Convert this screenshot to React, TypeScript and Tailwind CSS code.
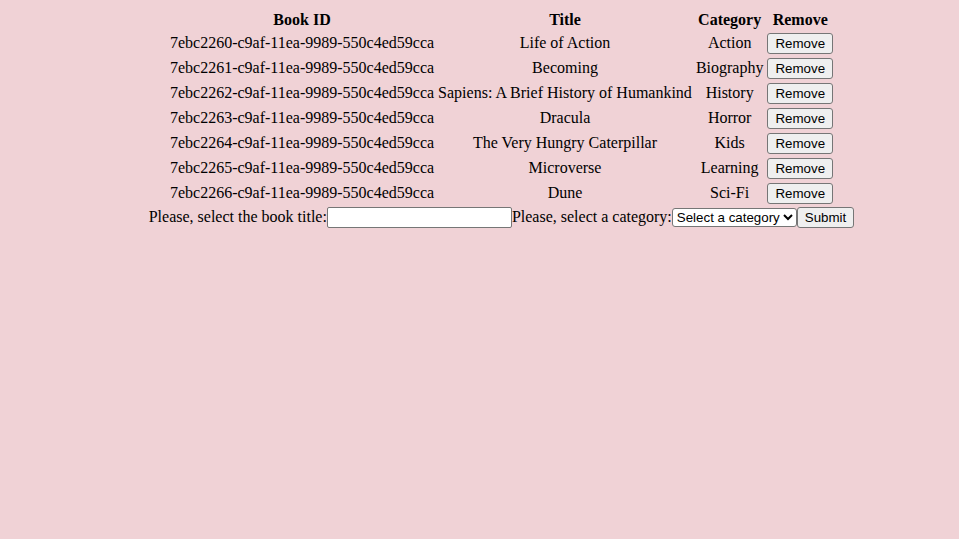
const books = [
  { id: '7ebc2260-c9af-11ea-9989-550c4ed59cca', title: 'Life of Action', category: 'Action' },
  { id: '7ebc2261-c9af-11ea-9989-550c4ed59cca', title: 'Becoming', category: 'Biography' },
  { id: '7ebc2262-c9af-11ea-9989-550c4ed59cca', title: 'Sapiens: A Brief History of Humankind', category: 'History' },
  { id: '7ebc2263-c9af-11ea-9989-550c4ed59cca', title: 'Dracula', category: 'Horror' },
  { id: '7ebc2264-c9af-11ea-9989-550c4ed59cca', title: 'The Very Hungry Caterpillar', category: 'Kids' },
  { id: '7ebc2265-c9af-11ea-9989-550c4ed59cca', title: 'Microverse', category: 'Learning' },
  { id: '7ebc2266-c9af-11ea-9989-550c4ed59cca', title: 'Dune', category: 'Sci-Fi' },
]

const categories = ['Action', 'Biography', 'History', 'Horror', 'Kids', 'Learning', 'Sci-Fi']

const btn =
  "bg-[#efefef] border border-[#767676] rounded-[3px] px-[7px] py-[2px] font-['Liberation_Sans',Arial,sans-serif] text-[13.333px] leading-[15px] text-black"

export default function App() {
  return (
    <div className="min-h-screen bg-[#f0d2d6] pl-[52px] pr-[8px] pt-[8px] font-['Liberation_Serif','Times_New_Roman',serif] text-[16px] leading-[normal] text-black">
      <table className="mx-auto border-separate border-spacing-[2px]">
        <thead>
          <tr>
            <th className="p-px font-bold text-center">Book ID</th>
            <th className="p-px font-bold text-center">Title</th>
            <th className="p-px font-bold text-center">Category</th>
            <th className="p-px font-bold text-center">Remove</th>
          </tr>
        </thead>
        <tbody>
          {books.map((b) => (
            <tr key={b.id}>
              <td className="p-px pb-[2px] text-center">{b.id}</td>
              <td className="p-px pb-[2px] text-center">{b.title}</td>
              <td className="p-px pb-[2px] text-center">{b.category}</td>
              <td className="p-px text-center">
                <button type="button" className={btn}>
                  Remove
                </button>
              </td>
            </tr>
          ))}
        </tbody>
      </table>

      <form className="text-center">
        <label>
          Please, select the book title:
          <input
            type="text"
            className="w-[185px] h-[21px] bg-white border border-[#767676] rounded-[2px] px-[2px] align-baseline font-['Liberation_Sans',Arial,sans-serif] text-[13.333px]"
          />
        </label>
        <label>
          Please, select a category:
          <select
            defaultValue=""
            className="w-[125px] h-[19px] bg-white border border-[#767676] rounded-[3px] font-['Liberation_Sans',Arial,sans-serif] text-[13.333px]"
          >
            <option value="" disabled>
              Select a category
            </option>
            {categories.map((c) => (
              <option key={c} value={c}>
                {c}
              </option>
            ))}
          </select>
        </label>
        <button type="submit" className={btn}>
          Submit
        </button>
      </form>
    </div>
  )
}
